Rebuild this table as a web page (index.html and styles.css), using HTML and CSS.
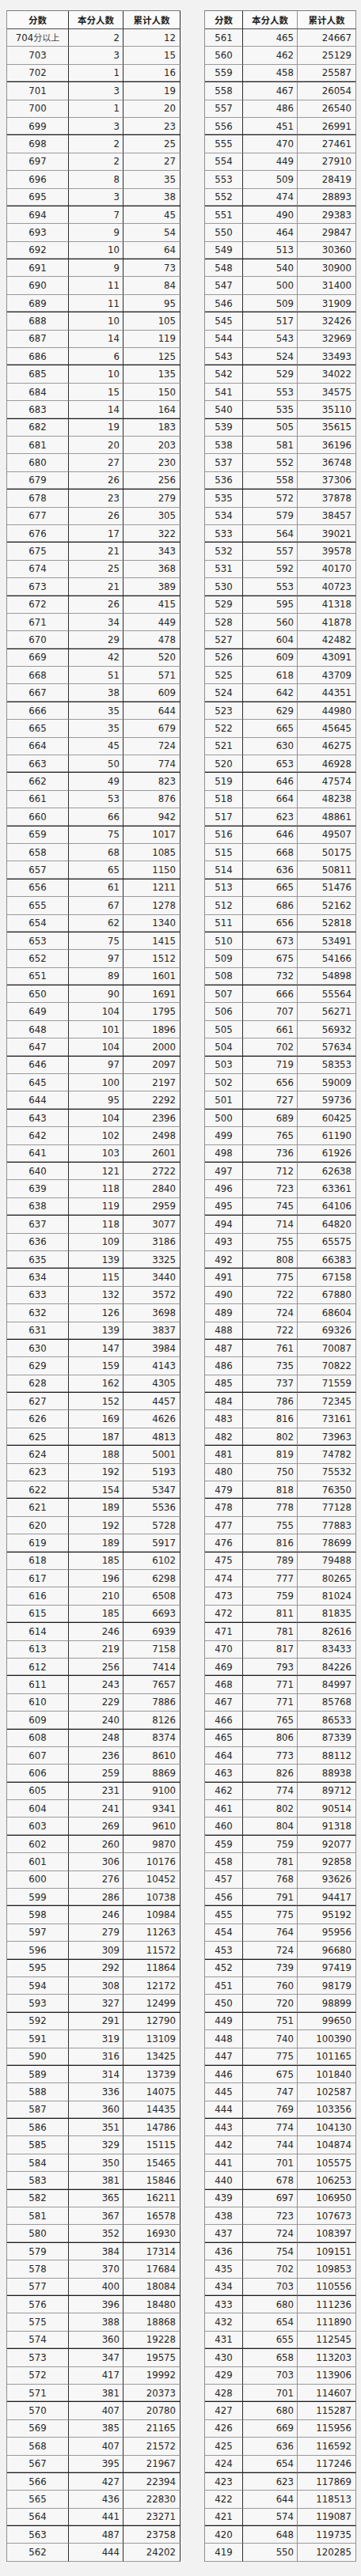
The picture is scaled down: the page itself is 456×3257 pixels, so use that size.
FILE: index.html
```html
<!DOCTYPE html>
<html lang="zh-CN">
<head>
<meta charset="utf-8">
<title>一分一段表</title>
<link rel="stylesheet" href="styles.css">
</head>
<body>
<main class="sheet">
<table class="score-table score-table--left">
<thead><tr><th class="col-score">分数</th><th class="col-count">本分人数</th><th class="col-total">累计人数</th></tr></thead>
<tbody>
<tr><td>704<span class="unit">分以上</span></td><td>2</td><td>12</td></tr>
<tr><td>703</td><td>3</td><td>15</td></tr>
<tr class="k"><td>702</td><td>1</td><td>16</td></tr>
<tr><td>701</td><td>3</td><td>19</td></tr>
<tr><td>700</td><td>1</td><td>20</td></tr>
<tr class="k"><td>699</td><td>3</td><td>23</td></tr>
<tr><td>698</td><td>2</td><td>25</td></tr>
<tr><td>697</td><td>2</td><td>27</td></tr>
<tr><td>696</td><td>8</td><td>35</td></tr>
<tr class="k"><td>695</td><td>3</td><td>38</td></tr>
<tr><td>694</td><td>7</td><td>45</td></tr>
<tr><td>693</td><td>9</td><td>54</td></tr>
<tr class="k"><td>692</td><td>10</td><td>64</td></tr>
<tr><td>691</td><td>9</td><td>73</td></tr>
<tr><td>690</td><td>11</td><td>84</td></tr>
<tr class="k"><td>689</td><td>11</td><td>95</td></tr>
<tr><td>688</td><td>10</td><td>105</td></tr>
<tr><td>687</td><td>14</td><td>119</td></tr>
<tr class="k"><td>686</td><td>6</td><td>125</td></tr>
<tr><td>685</td><td>10</td><td>135</td></tr>
<tr><td>684</td><td>15</td><td>150</td></tr>
<tr class="k"><td>683</td><td>14</td><td>164</td></tr>
<tr><td>682</td><td>19</td><td>183</td></tr>
<tr><td>681</td><td>20</td><td>203</td></tr>
<tr><td>680</td><td>27</td><td>230</td></tr>
<tr class="k"><td>679</td><td>26</td><td>256</td></tr>
<tr><td>678</td><td>23</td><td>279</td></tr>
<tr><td>677</td><td>26</td><td>305</td></tr>
<tr class="k"><td>676</td><td>17</td><td>322</td></tr>
<tr><td>675</td><td>21</td><td>343</td></tr>
<tr><td>674</td><td>25</td><td>368</td></tr>
<tr class="k"><td>673</td><td>21</td><td>389</td></tr>
<tr><td>672</td><td>26</td><td>415</td></tr>
<tr><td>671</td><td>34</td><td>449</td></tr>
<tr class="k"><td>670</td><td>29</td><td>478</td></tr>
<tr><td>669</td><td>42</td><td>520</td></tr>
<tr><td>668</td><td>51</td><td>571</td></tr>
<tr class="k"><td>667</td><td>38</td><td>609</td></tr>
<tr><td>666</td><td>35</td><td>644</td></tr>
<tr><td>665</td><td>35</td><td>679</td></tr>
<tr><td>664</td><td>45</td><td>724</td></tr>
<tr class="k"><td>663</td><td>50</td><td>774</td></tr>
<tr><td>662</td><td>49</td><td>823</td></tr>
<tr><td>661</td><td>53</td><td>876</td></tr>
<tr class="k"><td>660</td><td>66</td><td>942</td></tr>
<tr><td>659</td><td>75</td><td>1017</td></tr>
<tr><td>658</td><td>68</td><td>1085</td></tr>
<tr class="k"><td>657</td><td>65</td><td>1150</td></tr>
<tr><td>656</td><td>61</td><td>1211</td></tr>
<tr><td>655</td><td>67</td><td>1278</td></tr>
<tr class="k"><td>654</td><td>62</td><td>1340</td></tr>
<tr><td>653</td><td>75</td><td>1415</td></tr>
<tr><td>652</td><td>97</td><td>1512</td></tr>
<tr class="k"><td>651</td><td>89</td><td>1601</td></tr>
<tr><td>650</td><td>90</td><td>1691</td></tr>
<tr><td>649</td><td>104</td><td>1795</td></tr>
<tr><td>648</td><td>101</td><td>1896</td></tr>
<tr class="k"><td>647</td><td>104</td><td>2000</td></tr>
<tr><td>646</td><td>97</td><td>2097</td></tr>
<tr><td>645</td><td>100</td><td>2197</td></tr>
<tr class="k"><td>644</td><td>95</td><td>2292</td></tr>
<tr><td>643</td><td>104</td><td>2396</td></tr>
<tr><td>642</td><td>102</td><td>2498</td></tr>
<tr class="k"><td>641</td><td>103</td><td>2601</td></tr>
<tr><td>640</td><td>121</td><td>2722</td></tr>
<tr><td>639</td><td>118</td><td>2840</td></tr>
<tr class="k"><td>638</td><td>119</td><td>2959</td></tr>
<tr><td>637</td><td>118</td><td>3077</td></tr>
<tr><td>636</td><td>109</td><td>3186</td></tr>
<tr class="k"><td>635</td><td>139</td><td>3325</td></tr>
<tr><td>634</td><td>115</td><td>3440</td></tr>
<tr><td>633</td><td>132</td><td>3572</td></tr>
<tr><td>632</td><td>126</td><td>3698</td></tr>
<tr class="k"><td>631</td><td>139</td><td>3837</td></tr>
<tr><td>630</td><td>147</td><td>3984</td></tr>
<tr><td>629</td><td>159</td><td>4143</td></tr>
<tr class="k"><td>628</td><td>162</td><td>4305</td></tr>
<tr><td>627</td><td>152</td><td>4457</td></tr>
<tr><td>626</td><td>169</td><td>4626</td></tr>
<tr class="k"><td>625</td><td>187</td><td>4813</td></tr>
<tr><td>624</td><td>188</td><td>5001</td></tr>
<tr><td>623</td><td>192</td><td>5193</td></tr>
<tr class="k"><td>622</td><td>154</td><td>5347</td></tr>
<tr><td>621</td><td>189</td><td>5536</td></tr>
<tr><td>620</td><td>192</td><td>5728</td></tr>
<tr class="k"><td>619</td><td>189</td><td>5917</td></tr>
<tr><td>618</td><td>185</td><td>6102</td></tr>
<tr><td>617</td><td>196</td><td>6298</td></tr>
<tr><td>616</td><td>210</td><td>6508</td></tr>
<tr class="k"><td>615</td><td>185</td><td>6693</td></tr>
<tr><td>614</td><td>246</td><td>6939</td></tr>
<tr><td>613</td><td>219</td><td>7158</td></tr>
<tr class="k"><td>612</td><td>256</td><td>7414</td></tr>
<tr><td>611</td><td>243</td><td>7657</td></tr>
<tr><td>610</td><td>229</td><td>7886</td></tr>
<tr class="k"><td>609</td><td>240</td><td>8126</td></tr>
<tr><td>608</td><td>248</td><td>8374</td></tr>
<tr><td>607</td><td>236</td><td>8610</td></tr>
<tr class="k"><td>606</td><td>259</td><td>8869</td></tr>
<tr><td>605</td><td>231</td><td>9100</td></tr>
<tr><td>604</td><td>241</td><td>9341</td></tr>
<tr class="k"><td>603</td><td>269</td><td>9610</td></tr>
<tr><td>602</td><td>260</td><td>9870</td></tr>
<tr><td>601</td><td>306</td><td>10176</td></tr>
<tr><td>600</td><td>276</td><td>10452</td></tr>
<tr class="k"><td>599</td><td>286</td><td>10738</td></tr>
<tr><td>598</td><td>246</td><td>10984</td></tr>
<tr><td>597</td><td>279</td><td>11263</td></tr>
<tr class="k"><td>596</td><td>309</td><td>11572</td></tr>
<tr><td>595</td><td>292</td><td>11864</td></tr>
<tr><td>594</td><td>308</td><td>12172</td></tr>
<tr class="k"><td>593</td><td>327</td><td>12499</td></tr>
<tr><td>592</td><td>291</td><td>12790</td></tr>
<tr><td>591</td><td>319</td><td>13109</td></tr>
<tr class="k"><td>590</td><td>316</td><td>13425</td></tr>
<tr><td>589</td><td>314</td><td>13739</td></tr>
<tr><td>588</td><td>336</td><td>14075</td></tr>
<tr class="k"><td>587</td><td>360</td><td>14435</td></tr>
<tr><td>586</td><td>351</td><td>14786</td></tr>
<tr><td>585</td><td>329</td><td>15115</td></tr>
<tr><td>584</td><td>350</td><td>15465</td></tr>
<tr class="k"><td>583</td><td>381</td><td>15846</td></tr>
<tr><td>582</td><td>365</td><td>16211</td></tr>
<tr><td>581</td><td>367</td><td>16578</td></tr>
<tr class="k"><td>580</td><td>352</td><td>16930</td></tr>
<tr><td>579</td><td>384</td><td>17314</td></tr>
<tr><td>578</td><td>370</td><td>17684</td></tr>
<tr class="k"><td>577</td><td>400</td><td>18084</td></tr>
<tr><td>576</td><td>396</td><td>18480</td></tr>
<tr><td>575</td><td>388</td><td>18868</td></tr>
<tr class="k"><td>574</td><td>360</td><td>19228</td></tr>
<tr><td>573</td><td>347</td><td>19575</td></tr>
<tr><td>572</td><td>417</td><td>19992</td></tr>
<tr class="k"><td>571</td><td>381</td><td>20373</td></tr>
<tr><td>570</td><td>407</td><td>20780</td></tr>
<tr><td>569</td><td>385</td><td>21165</td></tr>
<tr><td>568</td><td>407</td><td>21572</td></tr>
<tr class="k"><td>567</td><td>395</td><td>21967</td></tr>
<tr><td>566</td><td>427</td><td>22394</td></tr>
<tr><td>565</td><td>436</td><td>22830</td></tr>
<tr class="k"><td>564</td><td>441</td><td>23271</td></tr>
<tr><td>563</td><td>487</td><td>23758</td></tr>
<tr><td>562</td><td>444</td><td>24202</td></tr>
</tbody>
</table>
<table class="score-table score-table--right">
<thead><tr><th class="col-score">分数</th><th class="col-count">本分人数</th><th class="col-total">累计人数</th></tr></thead>
<tbody>
<tr><td>561</td><td>465</td><td>24667</td></tr>
<tr><td>560</td><td>462</td><td>25129</td></tr>
<tr class="k"><td>559</td><td>458</td><td>25587</td></tr>
<tr><td>558</td><td>467</td><td>26054</td></tr>
<tr><td>557</td><td>486</td><td>26540</td></tr>
<tr class="k"><td>556</td><td>451</td><td>26991</td></tr>
<tr><td>555</td><td>470</td><td>27461</td></tr>
<tr><td>554</td><td>449</td><td>27910</td></tr>
<tr><td>553</td><td>509</td><td>28419</td></tr>
<tr class="k"><td>552</td><td>474</td><td>28893</td></tr>
<tr><td>551</td><td>490</td><td>29383</td></tr>
<tr><td>550</td><td>464</td><td>29847</td></tr>
<tr class="k"><td>549</td><td>513</td><td>30360</td></tr>
<tr><td>548</td><td>540</td><td>30900</td></tr>
<tr><td>547</td><td>500</td><td>31400</td></tr>
<tr class="k"><td>546</td><td>509</td><td>31909</td></tr>
<tr><td>545</td><td>517</td><td>32426</td></tr>
<tr><td>544</td><td>543</td><td>32969</td></tr>
<tr class="k"><td>543</td><td>524</td><td>33493</td></tr>
<tr><td>542</td><td>529</td><td>34022</td></tr>
<tr><td>541</td><td>553</td><td>34575</td></tr>
<tr class="k"><td>540</td><td>535</td><td>35110</td></tr>
<tr><td>539</td><td>505</td><td>35615</td></tr>
<tr><td>538</td><td>581</td><td>36196</td></tr>
<tr><td>537</td><td>552</td><td>36748</td></tr>
<tr class="k"><td>536</td><td>558</td><td>37306</td></tr>
<tr><td>535</td><td>572</td><td>37878</td></tr>
<tr><td>534</td><td>579</td><td>38457</td></tr>
<tr class="k"><td>533</td><td>564</td><td>39021</td></tr>
<tr><td>532</td><td>557</td><td>39578</td></tr>
<tr><td>531</td><td>592</td><td>40170</td></tr>
<tr class="k"><td>530</td><td>553</td><td>40723</td></tr>
<tr><td>529</td><td>595</td><td>41318</td></tr>
<tr><td>528</td><td>560</td><td>41878</td></tr>
<tr class="k"><td>527</td><td>604</td><td>42482</td></tr>
<tr><td>526</td><td>609</td><td>43091</td></tr>
<tr><td>525</td><td>618</td><td>43709</td></tr>
<tr class="k"><td>524</td><td>642</td><td>44351</td></tr>
<tr><td>523</td><td>629</td><td>44980</td></tr>
<tr><td>522</td><td>665</td><td>45645</td></tr>
<tr><td>521</td><td>630</td><td>46275</td></tr>
<tr class="k"><td>520</td><td>653</td><td>46928</td></tr>
<tr><td>519</td><td>646</td><td>47574</td></tr>
<tr><td>518</td><td>664</td><td>48238</td></tr>
<tr class="k"><td>517</td><td>623</td><td>48861</td></tr>
<tr><td>516</td><td>646</td><td>49507</td></tr>
<tr><td>515</td><td>668</td><td>50175</td></tr>
<tr class="k"><td>514</td><td>636</td><td>50811</td></tr>
<tr><td>513</td><td>665</td><td>51476</td></tr>
<tr><td>512</td><td>686</td><td>52162</td></tr>
<tr class="k"><td>511</td><td>656</td><td>52818</td></tr>
<tr><td>510</td><td>673</td><td>53491</td></tr>
<tr><td>509</td><td>675</td><td>54166</td></tr>
<tr class="k"><td>508</td><td>732</td><td>54898</td></tr>
<tr><td>507</td><td>666</td><td>55564</td></tr>
<tr><td>506</td><td>707</td><td>56271</td></tr>
<tr><td>505</td><td>661</td><td>56932</td></tr>
<tr class="k"><td>504</td><td>702</td><td>57634</td></tr>
<tr><td>503</td><td>719</td><td>58353</td></tr>
<tr><td>502</td><td>656</td><td>59009</td></tr>
<tr class="k"><td>501</td><td>727</td><td>59736</td></tr>
<tr><td>500</td><td>689</td><td>60425</td></tr>
<tr><td>499</td><td>765</td><td>61190</td></tr>
<tr class="k"><td>498</td><td>736</td><td>61926</td></tr>
<tr><td>497</td><td>712</td><td>62638</td></tr>
<tr><td>496</td><td>723</td><td>63361</td></tr>
<tr class="k"><td>495</td><td>745</td><td>64106</td></tr>
<tr><td>494</td><td>714</td><td>64820</td></tr>
<tr><td>493</td><td>755</td><td>65575</td></tr>
<tr class="k"><td>492</td><td>808</td><td>66383</td></tr>
<tr><td>491</td><td>775</td><td>67158</td></tr>
<tr><td>490</td><td>722</td><td>67880</td></tr>
<tr><td>489</td><td>724</td><td>68604</td></tr>
<tr class="k"><td>488</td><td>722</td><td>69326</td></tr>
<tr><td>487</td><td>761</td><td>70087</td></tr>
<tr><td>486</td><td>735</td><td>70822</td></tr>
<tr class="k"><td>485</td><td>737</td><td>71559</td></tr>
<tr><td>484</td><td>786</td><td>72345</td></tr>
<tr><td>483</td><td>816</td><td>73161</td></tr>
<tr class="k"><td>482</td><td>802</td><td>73963</td></tr>
<tr><td>481</td><td>819</td><td>74782</td></tr>
<tr><td>480</td><td>750</td><td>75532</td></tr>
<tr class="k"><td>479</td><td>818</td><td>76350</td></tr>
<tr><td>478</td><td>778</td><td>77128</td></tr>
<tr><td>477</td><td>755</td><td>77883</td></tr>
<tr class="k"><td>476</td><td>816</td><td>78699</td></tr>
<tr><td>475</td><td>789</td><td>79488</td></tr>
<tr><td>474</td><td>777</td><td>80265</td></tr>
<tr><td>473</td><td>759</td><td>81024</td></tr>
<tr class="k"><td>472</td><td>811</td><td>81835</td></tr>
<tr><td>471</td><td>781</td><td>82616</td></tr>
<tr><td>470</td><td>817</td><td>83433</td></tr>
<tr class="k"><td>469</td><td>793</td><td>84226</td></tr>
<tr><td>468</td><td>771</td><td>84997</td></tr>
<tr><td>467</td><td>771</td><td>85768</td></tr>
<tr class="k"><td>466</td><td>765</td><td>86533</td></tr>
<tr><td>465</td><td>806</td><td>87339</td></tr>
<tr><td>464</td><td>773</td><td>88112</td></tr>
<tr class="k"><td>463</td><td>826</td><td>88938</td></tr>
<tr><td>462</td><td>774</td><td>89712</td></tr>
<tr><td>461</td><td>802</td><td>90514</td></tr>
<tr class="k"><td>460</td><td>804</td><td>91318</td></tr>
<tr><td>459</td><td>759</td><td>92077</td></tr>
<tr><td>458</td><td>781</td><td>92858</td></tr>
<tr><td>457</td><td>768</td><td>93626</td></tr>
<tr class="k"><td>456</td><td>791</td><td>94417</td></tr>
<tr><td>455</td><td>775</td><td>95192</td></tr>
<tr><td>454</td><td>764</td><td>95956</td></tr>
<tr class="k"><td>453</td><td>724</td><td>96680</td></tr>
<tr><td>452</td><td>739</td><td>97419</td></tr>
<tr><td>451</td><td>760</td><td>98179</td></tr>
<tr class="k"><td>450</td><td>720</td><td>98899</td></tr>
<tr><td>449</td><td>751</td><td>99650</td></tr>
<tr><td>448</td><td>740</td><td>100390</td></tr>
<tr class="k"><td>447</td><td>775</td><td>101165</td></tr>
<tr><td>446</td><td>675</td><td>101840</td></tr>
<tr><td>445</td><td>747</td><td>102587</td></tr>
<tr class="k"><td>444</td><td>769</td><td>103356</td></tr>
<tr><td>443</td><td>774</td><td>104130</td></tr>
<tr><td>442</td><td>744</td><td>104874</td></tr>
<tr><td>441</td><td>701</td><td>105575</td></tr>
<tr class="k"><td>440</td><td>678</td><td>106253</td></tr>
<tr><td>439</td><td>697</td><td>106950</td></tr>
<tr><td>438</td><td>723</td><td>107673</td></tr>
<tr class="k"><td>437</td><td>724</td><td>108397</td></tr>
<tr><td>436</td><td>754</td><td>109151</td></tr>
<tr><td>435</td><td>702</td><td>109853</td></tr>
<tr class="k"><td>434</td><td>703</td><td>110556</td></tr>
<tr><td>433</td><td>680</td><td>111236</td></tr>
<tr><td>432</td><td>654</td><td>111890</td></tr>
<tr class="k"><td>431</td><td>655</td><td>112545</td></tr>
<tr><td>430</td><td>658</td><td>113203</td></tr>
<tr><td>429</td><td>703</td><td>113906</td></tr>
<tr class="k"><td>428</td><td>701</td><td>114607</td></tr>
<tr><td>427</td><td>680</td><td>115287</td></tr>
<tr><td>426</td><td>669</td><td>115956</td></tr>
<tr><td>425</td><td>636</td><td>116592</td></tr>
<tr class="k"><td>424</td><td>654</td><td>117246</td></tr>
<tr><td>423</td><td>623</td><td>117869</td></tr>
<tr><td>422</td><td>644</td><td>118513</td></tr>
<tr class="k"><td>421</td><td>574</td><td>119087</td></tr>
<tr><td>420</td><td>648</td><td>119735</td></tr>
<tr><td>419</td><td>550</td><td>120285</td></tr>
</tbody>
</table>
</main>
</body>
</html>
```

FILE: styles.css
```css
* {
  box-sizing: border-box;
}

html {
  background: #f1f2f1;
}

body {
  margin: 0;
  background: #f1f2f1;
  color: #262626;
  font-family: "Liberation Sans Narrow", "DejaVu Sans Condensed", "Noto Sans CJK SC", sans-serif;
}

.sheet {
  display: flex;
  align-items: flex-start;
  gap: 30px;
  padding: 13px 0 0 8px;
}

.score-table {
  border-collapse: separate;
  border-spacing: 0;
  table-layout: fixed;
  background: #f7f7f7;
  border-top: 1px solid #7a7a7a;
  border-left: 1px solid #8e8e8e;
  font-size: 13px;
}

.score-table--left {
  width: 220px;
}

.score-table--right {
  width: 192px;
}

.score-table th,
.score-table td {
  height: 22.4px;
  padding: 0;
  border-right: 1px solid #8e8e8e;
  border-bottom: 1px solid #9a9a9a;
  line-height: 14px;
  white-space: nowrap;
  vertical-align: middle;
}

.score-table th {
  height: 23px;
  font-family: "Noto Sans CJK SC", sans-serif;
  font-weight: 700;
  font-size: 11.5px;
  color: #1e1e1e;
  text-align: center;
  background: #fafafa;
  border-bottom-color: #4a4a4a;
}

.score-table--left .col-score { width: 78px; }
.score-table--left .col-count { width: 69px; }
.score-table--left .col-total { width: 72px; }

.score-table--right .col-score { width: 48px; }
.score-table--right .col-count { width: 69px; }
.score-table--right .col-total { width: 74px; }

.score-table td:nth-child(1) {
  text-align: center;
}

.score-table td:nth-child(2) {
  text-align: right;
  padding-right: 4px;
}

.score-table td:nth-child(3) {
  text-align: right;
  padding-right: 5px;
}

.score-table--left th,
.score-table--left td {
  border-right-color: #2e2e2e;
}

.score-table--right th:nth-child(1),
.score-table--right td:nth-child(1) {
  border-right-color: #2e2e2e;
}

.score-table tr.k td {
  border-bottom-color: #1c1c1c;
  box-shadow: inset 0 -1px 0 rgba(0, 0, 0, 0.28);
}

.unit {
  font-family: "Noto Sans CJK SC", sans-serif;
  font-size: 11px;
  color: #444;
}
```
